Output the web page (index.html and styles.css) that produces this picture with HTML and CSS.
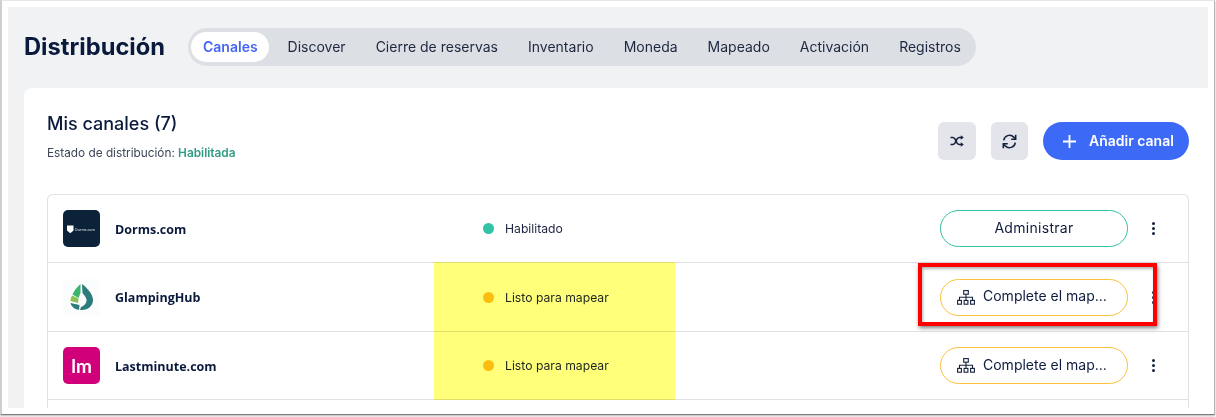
FILE: index.html
```html
<!DOCTYPE html>
<html lang="es">
<head>
<meta charset="utf-8">
<title>Distribución</title>
<link rel="stylesheet" href="styles.css">
</head>
<body>
<div class="shot">
  <main class="page">
    <header class="top">
      <h1 class="title">Distribución</h1>
      <nav class="tabs">
        <a class="tab tab-on">Canales</a>
        <a class="tab">Discover</a>
        <a class="tab">Cierre de reservas</a>
        <a class="tab">Inventario</a>
        <a class="tab">Moneda</a>
        <a class="tab">Mapeado</a>
        <a class="tab">Activación</a>
        <a class="tab">Registros</a>
      </nav>
    </header>
    <section class="card">
      <div class="card-head">
        <div>
          <h2 class="card-title">Mis canales (7)</h2>
          <p class="state">Estado de distribución: <b>Habilitada</b></p>
        </div>
        <div class="actions">
          <button class="square"><svg width="14" height="12" viewBox="0 0 14 12" fill="none" stroke="#14213d" stroke-width="1.6"><path d="M.5 2.500h2.200c1 0 1.500 .4 2.200 1.400l2.200 4.200c.7 1 1.200 1.400 2.200 1.400h2"/><path d="M.5 9.500h2.200c1 0 1.500-.4 2.200-1.400l2.200-4.200c.7-1 1.200-1.400 2.200-1.400h2"/><path d="M10.800 .2l3 2.300-3 2.300zM10.800 7.200l3 2.300-3 2.300z" fill="#14213d" stroke="none"/></svg></button>
          <button class="square sq-b"><svg width="15" height="15" viewBox="0 0 14 14" fill="none" stroke="#14213d" stroke-width="1.400"><path d="M12.800 .8v4.200H8.600"/><path d="M1.200 13.200V9h4.200"/><path d="M1.600 6A5.500 5.500 0 0 1 11 2.900L12.800 5"/><path d="M12.400 8A5.500 5.500 0 0 1 3 11.100L1.200 9"/></svg></button>
          <button class="add"><svg width="13" height="13" viewBox="0 0 13 13" stroke="#fff" stroke-width="1.800"><path d="M6.500 0v13M0 6.500h13"/></svg><span class="add-label">Añadir canal</span></button>
        </div>
      </div>
      <div class="list">
        <div class="row row-short">
          <div class="who">
            <span class="logo logo-d"><svg width="37" height="37" viewBox="0 0 37 37"><path d="M4 15.500h6.500v5l-3.250 2.800L4 20.500z" fill="#fff"/><text class="logo-word" x="12" y="20.500">Dorms.com</text></svg></span>
            <span class="name">Dorms.com</span>
          </div>
          <div class="status"><i class="dot dot-g"></i>Habilitado</div>
          <div class="cta">
            <button class="pill pill-g">Administrar</button>
            <span class="more"><i></i><i></i><i></i></span>
          </div>
        </div>
        <div class="row">
          <div class="who">
            <span class="logo logo-g"><svg width="37" height="37" viewBox="0 0 37 37"><path d="M19 5c5 4 11 10 11 16 0 6-5 10-11 10h-2l1-3c3-1 6-4 5.500-7.500-.5-2.500-2.500-4.500-4-6.500z" fill="#2b7c7b"/><path d="M17.500 5c-3.500 3-6.500 7-8 10.500l6 3.500 2-5z" fill="#3cb46e"/><path d="M9 16.500c-1 2-1.500 3.500-1.500 5.500l7.500 2 .5-4.500z" fill="#8cc152"/><path d="M7.500 24c.5 3 3.500 6 8.500 7l.5-5z" fill="#2b7c7b"/></svg></span>
            <span class="name">GlampingHub</span>
          </div>
          <div class="status"><i class="dot dot-y"></i>Listo para mapear</div>
          <div class="cta">
            <button class="pill pill-y"><svg width="18" height="15" viewBox="0 0 18 15" fill="none" stroke="#14213d" stroke-width="1.100"><rect x="6.700" y=".6" width="4.600" height="3.600"/><rect x=".6" y="10.400" width="3.800" height="3.800"/><rect x="7.100" y="10.400" width="3.800" height="3.800"/><rect x="13.600" y="10.400" width="3.800" height="3.800"/><path d="M9 4.200v6.200M2.500 10.400V7.300h13v3.100"/></svg>Complete el map...</button>
            <span class="more"><i></i><i></i><i></i></span>
          </div>
        </div>
        <div class="row row-short">
          <div class="who">
            <span class="logo logo-l">lm</span>
            <span class="name">Lastminute.com</span>
          </div>
          <div class="status"><i class="dot dot-y"></i>Listo para mapear</div>
          <div class="cta">
            <button class="pill pill-y"><svg width="18" height="15" viewBox="0 0 18 15" fill="none" stroke="#14213d" stroke-width="1.100"><rect x="6.700" y=".6" width="4.600" height="3.600"/><rect x=".6" y="10.400" width="3.800" height="3.800"/><rect x="7.100" y="10.400" width="3.800" height="3.800"/><rect x="13.600" y="10.400" width="3.800" height="3.800"/><path d="M9 4.200v6.200M2.500 10.400V7.300h13v3.100"/></svg>Complete el map...</button>
            <span class="more"><i></i><i></i><i></i></span>
          </div>
        </div>
      </div>
    </section>
    <div class="highlight"></div>
    <div class="redbox"></div>
  </main>
</div>
</body>
</html>
```
FILE: styles.css
```css
* { box-sizing: border-box; }
html, body { margin: 0; background: #fff; }
body { font-family: Inter, "Liberation Sans", sans-serif; color: #0f1c3f; width: 1216px; height: 417px; overflow: hidden; }
.shot { width: 1215px; height: 415px; border: 1px solid #e6e6e6; border-left: 2px solid #cfcfcf; border-right-color: #b5b5b5; border-bottom-color: #7d7d7d; box-shadow: 0 1px 2px rgba(0,0,0,.3); padding: 6px; background: #fff; }
.page { position: relative; height: 100%; background: #f1f2f4; padding-left: 16px; overflow: hidden; }
.top { height: 81px; display: flex; align-items: center; gap: 23px; padding-bottom: 2px; }
.title { margin: 0 0 1px; font-size: 23.700px; font-weight: 700; color: #0a1a3c; }
.tabs { display: flex; align-items: center; height: 38px; padding: 0 0 0 3px; background: #dcdfe4; border-radius: 19px; }
.tab { font-size: 14px; line-height: 29px; padding: 0 15px 1px; color: #1d2740; border-radius: 15px; }
.tab-on { background: #fff; color: #4566f5; font-weight: 600; padding: 0 11px 1px 12px; margin-right: 4px; }
.card { background: #fff; border-radius: 8px 0 0 0; padding: 23px 19px 0 23px; height: 320px; }
.card-head { display: flex; justify-content: space-between; align-items: flex-start; height: 83px; }
.card-title { margin: 0; padding-top: 1px; font-size: 18px; font-weight: 500; line-height: 24px; color: #0a1a3c; }
.state { margin: 8px 0 0; font-size: 11.800px; color: #3c4658; line-height: 18px; }
.state b { color: #2f9c85; font-weight: 600; }
.actions { display: flex; align-items: center; gap: 15px; margin-top: 11px; }
.square { width: 38px; height: 38px; border: 0; border-radius: 6px; background: #e3e5ea; padding: 0; display: flex; align-items: center; justify-content: center; }
.sq-b { width: 37px; }
.add { width: 146px; height: 38px; border: 0; border-radius: 19px; background: #3c69f6; color: #fff; display: flex; align-items: center; padding: 0 0 0 20px; gap: 13px; font: 600 14px Inter, sans-serif; }
.add-label { padding-bottom: 2px; }
.list { border: 1px solid #e0e1e6; border-bottom: 0; border-radius: 6px 6px 0 0; height: 240px; }
.row { height: 69px; display: flex; align-items: center; border-bottom: 1px solid #e0e1e6; }
.row-short { height: 68px; }
.who { width: 435px; display: flex; align-items: center; padding-left: 15px; gap: 15px; }
.logo { width: 37px; height: 37px; border-radius: 5px; display: flex; align-items: center; justify-content: center; }
.logo-d { background: #0b2239; }
.logo-word { font: 600 3.600px "Open Sans", sans-serif; fill: #c9d0d8; }
.logo-g { background: #fbfcfc; }
.logo-l { background: #d1007a; color: #fff; font: 700 19px/37px Lato, sans-serif; }
.name { font: 700 12.500px "Open Sans", sans-serif; color: #0a1a3c; padding-top: 1px; }
.status { width: 457px; display: flex; align-items: center; gap: 11px; font-size: 12.200px; color: #1c2440; }
.dot { width: 11px; height: 11px; border-radius: 50%; }
.dot-g { background: #31c3a5; }
.dot-y { background: #fdbd1c; }
.cta { display: flex; align-items: center; gap: 20px; }
.pill { width: 188px; height: 37px; border-radius: 19px; background: #fff; font: 400 14px Inter, sans-serif; color: #0f1c3f; display: flex; align-items: center; gap: 8px; white-space: nowrap; padding: 0 0 3px 16px; }
.pill svg { margin-top: 3px; }
.pill-g { border: 1px solid #31c3a5; justify-content: center; padding: 0 0 3px; letter-spacing: .3px; }
.pill-y { border: 1px solid #fbc13c; }
.more { display: flex; flex-direction: column; gap: 2px; width: 10px; align-items: center; }
.more i { width: 3px; height: 3px; border-radius: 50%; background: #14213d; }
.highlight { position: absolute; left: 426px; top: 255px; width: 241px; height: 138px; background: #ffff00; opacity: .52; mix-blend-mode: multiply; }
.redbox { position: absolute; left: 910px; top: 256px; width: 239px; height: 63px; border: 4px solid #f00; box-shadow: 1px 2px 4px rgba(0,0,0,.5), inset 1px 2px 3px rgba(0,0,0,.3); }
```
